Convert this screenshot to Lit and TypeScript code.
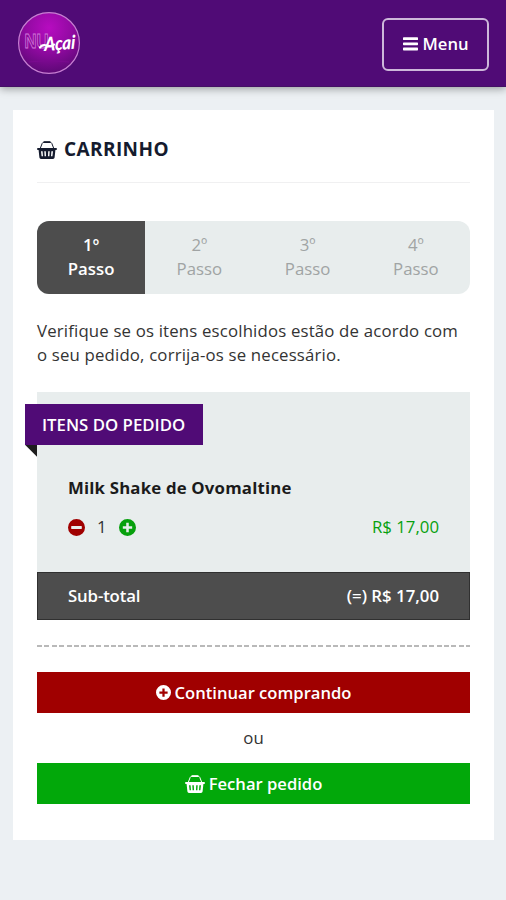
import { LitElement, html, svg, css } from "lit";
import { customElement } from "lit/decorators.js";

const basket = html`<svg class="basket" viewBox="0 0 20 18">
  <path d="M3.4 7 L5.2 2.4 Q5.8 1.1 7.2 1.1 H12.8 Q14.2 1.1 14.8 2.4 L16.6 7" fill="none" stroke="currentColor" stroke-width="1" />
  <rect x="6.5" y="0.2" width="7" height="1.9" rx="0.8" fill="currentColor" />
  <path fill="currentColor" fill-rule="evenodd" d="M1 7H19Q20 7 20 8T19 9H18.4L17.6 16.6Q17.4 18 16 18H4Q2.6 18 2.4 16.6L1.6 9H1Q0 9 0 8T1 7Z
    M4 10.2L4.6 15.2H6L5.6 10.2ZM7.3 10.2L7.6 15.2H9L8.8 10.2ZM11.2 10.2L11 15.2H12.4L12.7 10.2ZM14.4 10.2L14 15.2H15.4L16 10.2Z" />
</svg>`;

const plus = svg`<path fill="currentColor" fill-rule="evenodd" d="M8 0A8 8 0 1 1 8 16A8 8 0 0 1 8 0ZM6.8 3.6V6.8H3.6V9.2H6.8V12.4H9.2V9.2H12.4V6.8H9.2V3.6Z"/>`;
const minus = svg`<path fill="currentColor" fill-rule="evenodd" d="M8 0A8 8 0 1 1 8 16A8 8 0 0 1 8 0ZM3.4 6.7Q3 6.7 3 7.2V8.9Q3 9.3 3.4 9.3H12.6Q13 9.3 13 8.9V7.2Q13 6.7 12.6 6.7Z"/>`;

@customElement("app-root")
export class AppRoot extends LitElement {
  static styles = css`
    :host {
      display: block;
      min-height: 900px;
      background: #ecf0f3;
      color: #333;
      font: 16.8px/24.4px "Open Sans", sans-serif;
    }
    * { box-sizing: border-box; }
    svg { display: block; flex: none; }
    header {
      height: 87px;
      padding: 0 17px;
      display: flex;
      align-items: center;
      justify-content: space-between;
      background: #500b76;
      border-bottom: 1px solid #441064;
      box-shadow: 0 2px 8px rgba(0, 0, 0, 0.35);
    }
    .logo { width: 64px; height: 64px; }
    .menu {
      width: 107px;
      height: 53px;
      margin-top: 2px;
      border: 2px solid #cdb8da;
      border-radius: 6px;
      display: flex;
      align-items: center;
      justify-content: center;
      gap: 5px;
      color: #fff;
      font: 600 16.6px/24px "Open Sans", sans-serif;
      background: none;
      padding: 0;
    }
    .bars { width: 15px; height: 14px; }
    main {
      margin: 23px 12px 0 13px;
      height: 730px;
      padding: 0 24px;
      background: #fff;
    }
    h1 {
      margin: 0;
      height: 73px;
      padding-top: 7px;
      border-bottom: 1px solid #f0f0f1;
      display: flex;
      align-items: center;
      gap: 7px;
      color: #151b2e;
      font-size: 19px;
      font-weight: 700;
      letter-spacing: 0.4px;
    }
    .basket { width: 20px; height: 18px; }
    h1 .basket { margin-top: 1px; }
    .steps {
      margin-top: 38px;
      height: 73px;
      display: grid;
      grid-template-columns: repeat(4, 1fr);
      border-radius: 12px;
      overflow: hidden;
      background: #e8eded;
      color: #a0a4a4;
      text-align: center;
    }
    .step { padding-top: 12px; }
    .active { background: #4d4d4d; color: #fff; font-weight: 600; }
    .info { margin: 25px 0 0; white-space: nowrap; letter-spacing: 0.17px; }
    .order {
      margin-top: 24px;
      height: 180px;
      padding-top: 12px;
      background: #e8eded;
    }
    .ribbon {
      position: relative;
      width: 178px;
      height: 41px;
      margin-left: -12px;
      padding-left: 17px;
      background: #500b76;
      color: #fff;
      font-weight: 600;
      line-height: 41px;
      white-space: nowrap;
    }
    .ribbon::after {
      content: "";
      position: absolute;
      left: 0;
      top: 100%;
      width: 12px;
      height: 12px;
      background: #1d1d1d;
      clip-path: polygon(0 0, 100% 0, 100% 100%);
    }
    .product { margin: 31px 31px 0; color: #1b1b1b; font-weight: 700; letter-spacing: 0.18px; }
    .line {
      margin: 15px 31px 0;
      display: flex;
      align-items: center;
      justify-content: space-between;
    }
    .qty { display: flex; align-items: center; gap: 12px; }
    .round { width: 17px; height: 17px; }
    .red { color: #a00000; }
    .green { color: #07a00d; }
    .total {
      height: 48px;
      display: flex;
      align-items: center;
      justify-content: space-between;
      background: #4d4d4d;
      border: 1px solid #303030;
      padding: 0 30px;
      color: #fff;
      font-weight: 600;
    }
    .sub { letter-spacing: -0.15px; }
    .dash {
      height: 2px;
      margin: 25px 0;
      background: repeating-linear-gradient(90deg, #b9b9b9 0 5px, #fff 5px 7.4px);
    }
    .btn {
      height: 41px;
      padding-top: 1px;
      display: flex;
      align-items: center;
      justify-content: center;
      gap: 4px;
      color: #fff;
      font-size: 16.6px;
      font-weight: 600;
    }
    .buy { background: #a00000; }
    .close { background: #02a80a; }
    .or { height: 50px; line-height: 50px; text-align: center; }
    .plus { width: 15px; height: 15px; }
  `;

  render() {
    return html`
      <header>
        <svg class="logo" viewBox="0 0 64 64">
          <defs>
            <radialGradient id="g" cx="50%" cy="25%" r="75%">
              <stop offset="0" stop-color="#b70cc0" />
              <stop offset="0.5" stop-color="#930aa3" />
              <stop offset="1" stop-color="#5d0876" />
            </radialGradient>
          </defs>
          <circle cx="32" cy="32" r="30.4" fill="url(#g)" stroke="#c77fd2" stroke-width="1.2" />
          <path d="M12 51Q32 48 52 51" stroke="#7b0a90" fill="none" />
          <text x="7.5" y="37" font-family="Liberation Sans" font-weight="700" font-size="21" textLength="24" lengthAdjust="spacingAndGlyphs" fill="#8a0b9b" stroke="#d277da" stroke-width="0.9">NU</text>
          <text x="27" y="39" font-family="Lato, sans-serif" font-style="italic" font-weight="900" font-size="19" textLength="31" lengthAdjust="spacingAndGlyphs" fill="#fff" transform="rotate(-4 40 35) translate(3.4 0) skewX(-5)">Açai</text>
          <path d="M23 36.5Q25 33 30 34.5T37 33.5" stroke="#fff" stroke-width="2.2" fill="none" stroke-linecap="round" />
        </svg>
        <button class="menu">
          <svg class="bars" viewBox="0 0 15 14" fill="#fff">
            <rect y="0.3" width="15" height="2.8" rx="0.7" /><rect y="5.4" width="15" height="2.8" rx="0.7" /><rect y="10.6" width="15" height="2.8" rx="0.7" />
          </svg>
          <span>Menu</span>
        </button>
      </header>
      <main>
        <h1>${basket}<span>CARRINHO</span></h1>
        <div class="steps">
          ${[1, 2, 3, 4].map((n) => html`<div class="step ${n === 1 ? "active" : ""}">${n}º<br />Passo</div>`)}
        </div>
        <p class="info">Verifique se os itens escolhidos estão de acordo com<br />o seu pedido, corrija-os se necessário.</p>
        <section class="order">
          <div class="ribbon">ITENS DO PEDIDO</div>
          <div class="product">Milk Shake de Ovomaltine</div>
          <div class="line">
            <div class="qty">
              <svg class="round red" viewBox="0 0 16 16">${minus}</svg>
              <span>1</span>
              <svg class="round green" viewBox="0 0 16 16">${plus}</svg>
            </div>
            <span class="green">R$ 17,00</span>
          </div>
        </section>
        <div class="total"><span class="sub">Sub-total</span><span>(=) R$ 17,00</span></div>
        <div class="dash"></div>
        <div class="btn buy"><svg class="plus" viewBox="0 0 16 16">${plus}</svg><span>Continuar comprando</span></div>
        <div class="or">ou</div>
        <div class="btn close">${basket}<span>Fechar pedido</span></div>
      </main>
    `;
  }
}
